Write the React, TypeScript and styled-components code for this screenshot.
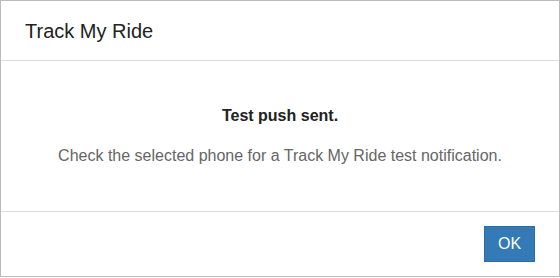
import React from "react";
import styled, { createGlobalStyle } from "styled-components";

const Global = createGlobalStyle`
  html, body { margin: 0; padding: 0; background: #ffffff; }
  * { box-sizing: border-box; }
  body { font-family: "Liberation Sans", Arial, sans-serif; }
`;

const Dialog = styled.div`
  width: 560px;
  height: 277px;
  border: 1px solid #bbbbbb;
  background: #ffffff;
  display: flex;
  flex-direction: column;
`;

const Header = styled.div`
  height: 60px;
  border-bottom: 1px solid #dddddd;
  display: flex;
  align-items: center;
  padding: 0 24px;
`;

const Title = styled.h4`
  margin: 0;
  font-size: 20px;
  font-weight: 400;
  color: #222222;
  line-height: 1;
`;

const Body = styled.div`
  height: 151px;
  border-bottom: 1px solid #dddddd;
  display: flex;
  flex-direction: column;
  align-items: center;
  padding-top: 45px;
  gap: 20px;
`;

const Strong = styled.div`
  font-size: 16px;
  font-weight: 700;
  color: #222222;
  line-height: 20px;
`;

const Message = styled.div`
  font-size: 16px;
  color: #666666;
  line-height: 20px;
`;

const Footer = styled.div`
  flex: 1;
  display: flex;
  align-items: center;
  justify-content: flex-end;
  padding: 0 24px;
`;

const Button = styled.button`
  width: 51px;
  height: 36px;
  background: #337ab7;
  border: 1px solid #2e6da4;
  color: #ffffff;
  font-family: "Liberation Sans", Arial, sans-serif;
  font-size: 16px;
  padding: 0;
  cursor: pointer;
`;

export default function App() {
  return (
    <>
      <Global />
      <Dialog>
        <Header>
          <Title>Track My Ride</Title>
        </Header>
        <Body>
          <Strong>Test push sent.</Strong>
          <Message>Check the selected phone for a Track My Ride test notification.</Message>
        </Body>
        <Footer>
          <Button>OK</Button>
        </Footer>
      </Dialog>
    </>
  );
}
